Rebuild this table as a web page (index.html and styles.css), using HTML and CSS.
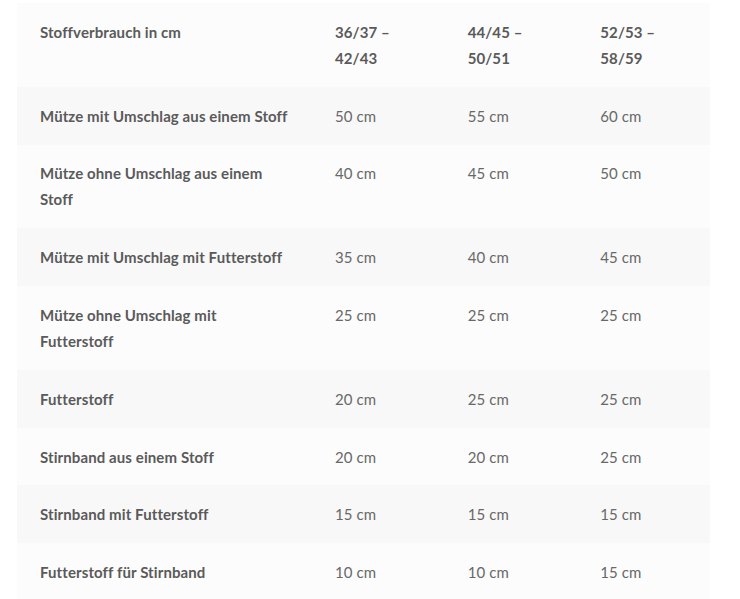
FILE: index.html
```html
<!DOCTYPE html>
<html lang="de">
<head>
<meta charset="utf-8">
<link rel="stylesheet" href="styles.css">
</head>
<body>
<table class="size-table">
  <thead>
    <tr>
      <th>Stoffverbrauch in cm</th>
      <th>36/37 – 42/43</th>
      <th>44/45 – 50/51</th>
      <th>52/53 – 58/59</th>
    </tr>
  </thead>
  <tbody>
    <tr><th>Mütze mit Umschlag aus einem Stoff</th><td>50 cm</td><td>55 cm</td><td>60 cm</td></tr>
    <tr><th>Mütze ohne Umschlag aus einem Stoff</th><td>40 cm</td><td>45 cm</td><td>50 cm</td></tr>
    <tr><th>Mütze mit Umschlag mit Futterstoff</th><td>35 cm</td><td>40 cm</td><td>45 cm</td></tr>
    <tr><th>Mütze ohne Umschlag mit Futterstoff</th><td>25 cm</td><td>25 cm</td><td>25 cm</td></tr>
    <tr><th>Futterstoff</th><td>20 cm</td><td>25 cm</td><td>25 cm</td></tr>
    <tr><th>Stirnband aus einem Stoff</th><td>20 cm</td><td>20 cm</td><td>25 cm</td></tr>
    <tr><th>Stirnband mit Futterstoff</th><td>15 cm</td><td>15 cm</td><td>15 cm</td></tr>
    <tr><th>Futterstoff für Stirnband</th><td>10 cm</td><td>10 cm</td><td>15 cm</td></tr>
  </tbody>
</table>
</body>
</html>
```
FILE: styles.css
```css
html, body {
  margin: 0;
  padding: 0;
  background: #ffffff;
}
body {
  padding: 3px 30px 0 17px;
  font-family: Lato, "Noto Sans", sans-serif;
  font-size: 15px;
  letter-spacing: 0.1px;
  line-height: 26px;
  color: #666666;
}
.size-table {
  width: 693px;
  border-collapse: collapse;
  table-layout: fixed;
}
.size-table th,
.size-table td {
  padding: 15.9px 23px;
  text-align: left;
  vertical-align: top;
}
.size-table th:first-child {
  width: 249px;
}
.size-table th {
  font-weight: 700;
  color: #5a5a5a;
}
.size-table td {
  font-weight: 400;
  color: #686868;
}
.size-table thead tr {
  background: #fcfcfc;
}
.size-table tbody tr:nth-child(odd) {
  background: #f8f8f8;
}
.size-table tbody tr:nth-child(even) {
  background: #fcfcfc;
}
```
